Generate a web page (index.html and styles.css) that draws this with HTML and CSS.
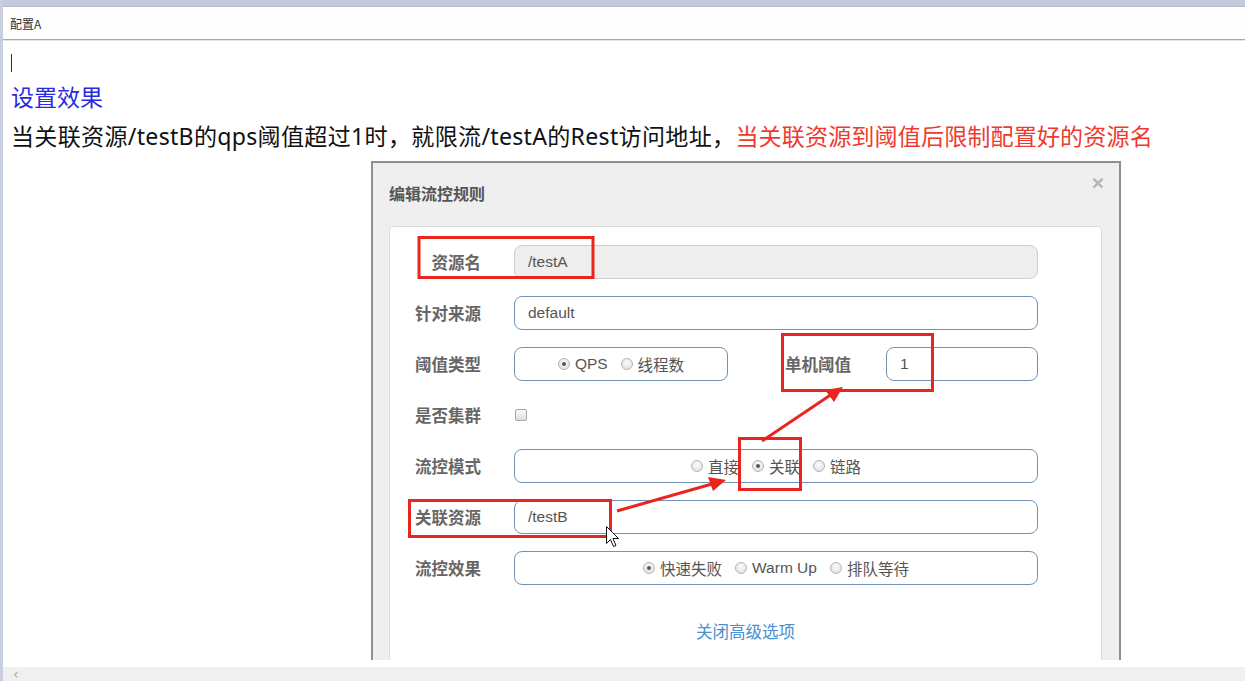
FILE: index.html
```html
<!DOCTYPE html>
<html lang="zh-CN">
<head>
<meta charset="utf-8">
<title>配置A</title>
<link rel="stylesheet" href="styles.css">
</head>
<body>
<div class="window">
  <div class="topband"></div>
  <div class="tabbar"><span class="tab">配置A</span></div>
  <div class="content">
    <div class="caret-line"><span class="caret"></span></div>
    <div class="heading">设置效果</div>
    <p class="desc">当关联资源/testB的qps阈值超过1时，就限流/testA的Rest访问地址，<span class="red">当关联资源到阈值后限制配置好的资源名</span></p>
    <div class="modal">
      <div class="modal-header">
        <h4 class="modal-title">编辑流控规则</h4>
        <span class="close">×</span>
      </div>
      <div class="panel">
        <div class="row">
          <label class="lbl">资源名</label>
          <div class="input disabled">/testA</div>
        </div>
        <div class="row">
          <label class="lbl">针对来源</label>
          <div class="input">default</div>
        </div>
        <div class="row">
          <label class="lbl">阈值类型</label>
          <div class="input radios small-box">
            <span class="radio checked"></span><span class="rtext">QPS</span>
            <span class="radio"></span><span class="rtext">线程数</span>
          </div>
          <label class="lbl2">单机阈值</label>
          <div class="input">1</div>
        </div>
        <div class="row">
          <label class="lbl">是否集群</label>
          <span class="checkbox"></span>
        </div>
        <div class="row">
          <label class="lbl">流控模式</label>
          <div class="input radios">
            <span class="radio"></span><span class="rtext">直接</span>
            <span class="radio checked"></span><span class="rtext">关联</span>
            <span class="radio"></span><span class="rtext">链路</span>
          </div>
        </div>
        <div class="row">
          <label class="lbl">关联资源</label>
          <div class="input">/testB</div>
        </div>
        <div class="row last">
          <label class="lbl">流控效果</label>
          <div class="input radios">
            <span class="radio checked"></span><span class="rtext">快速失败</span>
            <span class="radio"></span><span class="rtext">Warm Up</span>
            <span class="radio"></span><span class="rtext">排队等待</span>
          </div>
        </div>
        <div class="adv"><a class="adv-link">关闭高级选项</a></div>
      </div>
    </div>
  </div>
  <div class="gap"></div>
  <div class="hscroll"><span class="arrow-left">&lsaquo;</span></div>
</div>
<svg class="notes" width="1245" height="681" viewBox="0 0 1245 681">
  <g fill="none" stroke="#e8261d" stroke-width="3">
    <rect x="419" y="237.5" width="174" height="40"/>
    <rect x="782.5" y="334.5" width="150" height="56"/>
    <rect x="739.5" y="438.5" width="61" height="51"/>
    <rect x="409.5" y="500.5" width="201" height="36"/>
    <line x1="617" y1="511" x2="712" y2="484"/>
    <line x1="762" y1="441" x2="832" y2="394"/>
  </g>
  <g fill="#e8261d">
    <polygon points="726,480 708,477 713,491"/>
    <polygon points="843,387 825,390 834,402"/>
  </g>
  <path d="M606.5,526.5 L606.5,543.5 L610.5,539.5 L613.5,546.5 L616,545.5 L613,538.5 L618.5,538.5 Z" fill="#fff" stroke="#111" stroke-width="1"/>
</svg>
</body>
</html>
```

FILE: styles.css
```css
* { box-sizing: border-box; }

html, body {
  margin: 0;
  padding: 0;
  width: 1245px;
  height: 681px;
  overflow: hidden;
  background: #fff;
}

body {
  position: relative;
  font-family: "Noto Sans", "Noto Sans CJK SC", sans-serif;
}

.window {
  display: flex;
  flex-direction: column;
  height: 681px;
  border-left: 3px solid #c9cde0;
}

.topband {
  height: 7px;
  background: #c5c9dc;
  border-bottom: 1px solid #b4b8cc;
  flex: none;
}

.tabbar {
  height: 33px;
  flex: none;
  display: flex;
  align-items: center;
  padding-left: 7px;
  background: #fefefe;
  border-bottom: 1px solid #a9a9a9;
  box-shadow: 0 1px 0 #e4e4e4;
}

.tab {
  font-family: "Noto Sans CJK SC", sans-serif;
  font-size: 12px;
  color: #333;
}

.content {
  height: 620px;
  flex: none;
  overflow: hidden;
  padding-left: 8px;
}

.caret-line {
  height: 38px;
  padding-top: 14px;
}

.caret {
  display: block;
  width: 1px;
  height: 18px;
  background: #333;
}

.heading {
  height: 36px;
  line-height: 36px;
  font-size: 23px;
  color: #2a2ae0;
  font-family: "Noto Sans CJK SC", sans-serif;
}

.desc {
  margin: 0;
  height: 44px;
  line-height: 44px;
  font-size: 23.1px;
  letter-spacing: 0.28px;
  color: #111;
  white-space: nowrap;
}

.red {
  color: #ee3a2f;
  letter-spacing: 0.1px;
}

.modal {
  margin-top: 3px;
  margin-left: 360px;
  width: 750px;
  height: 640px;
  background: #efefef;
  border: 2px solid #8f8f8f;
  border-bottom: none;
  font-family: "Liberation Sans", "Noto Sans CJK SC", sans-serif;
}

.modal-header {
  height: 63px;
  padding: 18px 15px 0 16px;
  display: flex;
  justify-content: space-between;
  align-items: flex-start;
}

.modal-title {
  margin: 0;
  font-size: 16px;
  line-height: 24px;
  font-weight: bold;
  color: #555;
  font-family: "Noto Sans CJK SC", sans-serif;
}

.close {
  margin-top: -8px;
  font-size: 21px;
  line-height: 20px;
  font-weight: bold;
  color: #b5b5b5;
  font-family: "Liberation Sans", sans-serif;
}

.panel {
  margin: 0 17px 0 16px;
  background: #fff;
  border: 1px solid #dcdcdc;
  border-radius: 4px;
  padding-top: 18px;
  height: 600px;
}

.row {
  display: flex;
  align-items: center;
  height: 34px;
  margin: 0 63px 17px 0;
}

.row.last { margin-bottom: 0; }

.lbl {
  width: 91px;
  flex: none;
  margin-right: 33px;
  text-align: right;
  font-size: 16.5px;
  font-weight: bold;
  color: #666;
  font-family: "Noto Sans CJK SC", sans-serif;
}

.lbl2 {
  width: 68px;
  flex: none;
  margin: 0 33px 0 57px;
  font-size: 16.5px;
  font-weight: bold;
  color: #666;
  font-family: "Noto Sans CJK SC", sans-serif;
  white-space: nowrap;
}

.input {
  flex: 1;
  height: 34px;
  display: flex;
  align-items: center;
  padding-left: 13px;
  border: 1px solid #7093b6;
  border-radius: 8px;
  font-size: 15.5px;
  color: #555;
  background: #fff;
}

.input.disabled {
  background: #eeeeee;
  border-color: #cfcfcf;
}

.radios {
  justify-content: center;
  padding-left: 0;
}

.small-box {
  flex: none;
  width: 214px;
}

.radio {
  width: 12px;
  height: 12px;
  border-radius: 50%;
  border: 1px solid #b4b4b4;
  background: radial-gradient(circle at 50% 35%, #fbfbfb, #dcdcdc);
  margin-right: 5px;
  flex: none;
  position: relative;
}

.radio.checked::after {
  content: "";
  position: absolute;
  left: 3px;
  top: 3px;
  width: 4px;
  height: 4px;
  border-radius: 50%;
  background: #555;
}

.rtext {
  margin-right: 13px;
  white-space: nowrap;
  font-family: "Liberation Sans", "Noto Sans CJK SC", sans-serif;
}

.rtext:last-child { margin-right: 0; }

.checkbox {
  width: 12px;
  height: 12px;
  margin-left: 1px;
  border: 1px solid #a8a8a8;
  border-radius: 2px;
  background: linear-gradient(#fafafa, #dedede);
}

.adv {
  margin-top: 32px;
  height: 28px;
  line-height: 28px;
  text-align: center;
}

.adv-link {
  font-size: 16.5px;
  color: #4a8fcf;
  font-family: "Noto Sans CJK SC", sans-serif;
}

.gap {
  height: 7px;
  flex: none;
}

.hscroll {
  height: 14px;
  flex: none;
  background: #f0f0f0;
  padding-left: 10px;
  display: flex;
  align-items: center;
  overflow: hidden;
}

.arrow-left {
  font-size: 14px;
  line-height: 14px;
  height: 14px;
  color: #a9a9a9;
  font-family: "DejaVu Sans", sans-serif;
}

.notes {
  position: absolute;
  left: 0;
  top: 0;
  pointer-events: none;
}
```
